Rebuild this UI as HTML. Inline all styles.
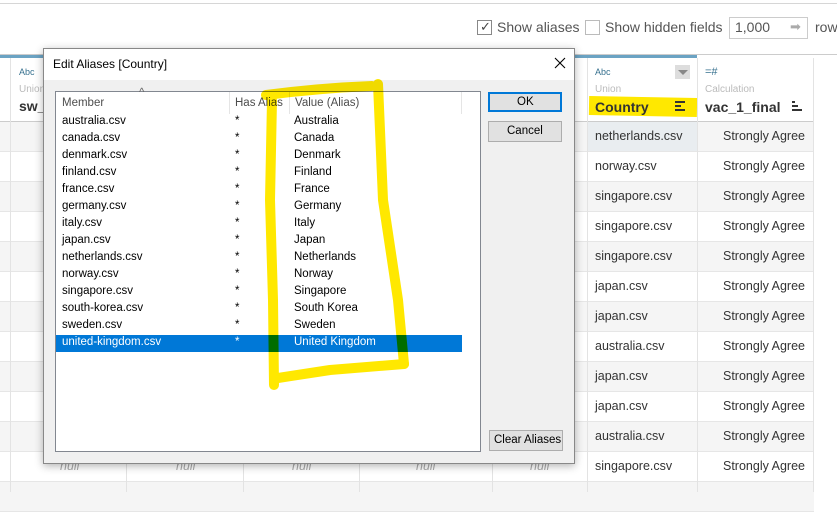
<!DOCTYPE html>
<html><head><style>
*{margin:0;padding:0;box-sizing:border-box}
body{width:837px;height:492px;overflow:hidden;background:#fff;font-family:"Liberation Sans",sans-serif;position:relative;color:#333}
.a{position:absolute}
.row{position:absolute;left:0;width:814px;height:30px;border-bottom:1px solid #e6e6e6}
.t{position:absolute;font-size:12.5px;color:#333;white-space:nowrap}
.vl{position:absolute;width:1px;background:#e3e3e3}
.dl{font-size:11.5px;position:absolute;white-space:nowrap;color:#000}
</style></head><body>
<div class="a" style="left:0;top:3px;width:837px;height:1px;background:#d6d6d6"></div>
<div class="a" style="left:477px;top:20px;width:15px;height:15px;border:1px solid #888;background:#fff"></div>
<div class="a" style="left:480px;top:19px;font-size:13px;color:#444">✓</div>
<div class="t" style="left:497px;top:19px;font-size:14px;color:#555">Show aliases</div>
<div class="a" style="left:585px;top:20px;width:15px;height:15px;border:1px solid #bbb"></div>
<div class="t" style="left:605px;top:19px;font-size:14px;color:#555">Show hidden fields</div>
<div class="a" style="left:729px;top:17px;width:79px;height:22px;border:1px solid #ccc"></div>
<div class="t" style="left:735px;top:19px;font-size:14px;color:#555">1,000</div>
<div class="t" style="left:790px;top:19px;font-size:13px;color:#aaa">➡</div>
<div class="t" style="left:815px;top:19px;font-size:14px;color:#555">row</div>
<div class="a" style="left:0;top:54px;width:837px;height:1px;background:#ccc"></div>
<div class="a" style="left:0;top:55px;width:588px;height:3px;background:#6ba3c3"></div>
<div class="a" style="left:588px;top:55px;width:109px;height:3px;background:#6ba3c3"></div>
<div class="a" style="left:0;top:121px;width:814px;height:1px;background:#ccc"></div>
<div class="t" style="left:19px;top:67px;font-size:9px;color:#37718f">Abc</div>
<div class="t" style="left:19px;top:84px;font-size:10px;color:#bbb">Union</div>
<div class="t" style="left:19px;top:98px;font-size:14px;font-weight:bold;color:#333">sw_1</div>
<div class="t" style="left:595px;top:67px;font-size:9px;color:#37718f">Abc</div>
<div class="a" style="left:675px;top:65px;width:15px;height:14px;background:#ddd"></div>
<div class="a" style="left:678px;top:70px;border-left:5px solid transparent;border-right:5px solid transparent;border-top:5px solid #888"></div>
<div class="t" style="left:595px;top:84px;font-size:10px;color:#bbb">Union</div>
<div class="a" style="left:589px;top:97px;width:108px;height:19px;background:#ffe800;transform:rotate(1deg)"></div>
<div class="t" style="left:595px;top:99px;font-size:14px;font-weight:bold;color:#333">Country</div>
<div class="a" style="left:675px;top:101px;width:10px;height:2px;background:#333"></div>
<div class="a" style="left:675px;top:105px;width:6px;height:2px;background:#333"></div>
<div class="a" style="left:675px;top:109px;width:10px;height:2px;background:#333"></div>
<div class="t" style="left:705px;top:66px;font-size:11px;color:#37718f">=#</div>
<div class="t" style="left:705px;top:84px;font-size:10px;color:#bbb">Calculation</div>
<div class="t" style="left:705px;top:99px;font-size:14px;font-weight:bold;color:#333">vac_1_final</div>
<div class="a" style="left:792px;top:101px;width:3px;height:2px;background:#333"></div>
<div class="a" style="left:792px;top:105px;width:6px;height:2px;background:#333"></div>
<div class="a" style="left:792px;top:109px;width:10px;height:2px;background:#333"></div>
<div class="row" style="top:122px;background:#f5f5f5"></div>
<div class="a" style="left:588px;top:122px;width:109px;height:29px;background:#e9edf0"></div>
<div class="row" style="top:152px"></div>
<div class="row" style="top:182px;background:#f5f5f5"></div>
<div class="row" style="top:212px"></div>
<div class="row" style="top:242px;background:#f5f5f5"></div>
<div class="row" style="top:272px"></div>
<div class="row" style="top:302px;background:#f5f5f5"></div>
<div class="row" style="top:332px"></div>
<div class="row" style="top:362px;background:#f5f5f5"></div>
<div class="row" style="top:392px"></div>
<div class="row" style="top:422px;background:#f5f5f5"></div>
<div class="row" style="top:452px"></div>
<div class="row" style="top:482px;background:#f5f5f5"></div>
<div class="vl" style="left:10px;top:58px;height:434px"></div>
<div class="vl" style="left:126px;top:58px;height:434px"></div>
<div class="vl" style="left:243px;top:58px;height:434px"></div>
<div class="vl" style="left:359px;top:58px;height:434px"></div>
<div class="vl" style="left:492px;top:58px;height:434px"></div>
<div class="vl" style="left:587px;top:58px;height:434px"></div>
<div class="vl" style="left:697px;top:58px;height:434px"></div>
<div class="vl" style="left:813px;top:58px;height:434px"></div>
<div class="t" style="left:595px;top:129px">netherlands.csv</div>
<div class="t" style="left:595px;top:159px">norway.csv</div>
<div class="t" style="left:595px;top:189px">singapore.csv</div>
<div class="t" style="left:595px;top:219px">singapore.csv</div>
<div class="t" style="left:595px;top:249px">singapore.csv</div>
<div class="t" style="left:595px;top:279px">japan.csv</div>
<div class="t" style="left:595px;top:309px">japan.csv</div>
<div class="t" style="left:595px;top:339px">australia.csv</div>
<div class="t" style="left:595px;top:369px">japan.csv</div>
<div class="t" style="left:595px;top:399px">japan.csv</div>
<div class="t" style="left:595px;top:429px">australia.csv</div>
<div class="t" style="left:595px;top:459px">singapore.csv</div>
<div class="t" style="left:723px;top:129px">Strongly Agree</div>
<div class="t" style="left:723px;top:159px">Strongly Agree</div>
<div class="t" style="left:723px;top:189px">Strongly Agree</div>
<div class="t" style="left:723px;top:219px">Strongly Agree</div>
<div class="t" style="left:723px;top:249px">Strongly Agree</div>
<div class="t" style="left:723px;top:279px">Strongly Agree</div>
<div class="t" style="left:723px;top:309px">Strongly Agree</div>
<div class="t" style="left:723px;top:339px">Strongly Agree</div>
<div class="t" style="left:723px;top:369px">Strongly Agree</div>
<div class="t" style="left:723px;top:399px">Strongly Agree</div>
<div class="t" style="left:723px;top:429px">Strongly Agree</div>
<div class="t" style="left:723px;top:459px">Strongly Agree</div>
<div class="t" style="left:60px;top:459px;font-style:italic;color:#aaa">null</div>
<div class="t" style="left:176px;top:459px;font-style:italic;color:#aaa">null</div>
<div class="t" style="left:292px;top:459px;font-style:italic;color:#aaa">null</div>
<div class="t" style="left:416px;top:459px;font-style:italic;color:#aaa">null</div>
<div class="t" style="left:530px;top:459px;font-style:italic;color:#aaa">null</div>
<div class="a" style="left:43px;top:48px;width:532px;height:416px;background:#f0f0f0;border:1px solid #888;box-shadow:0 2px 8px rgba(0,0,0,.3)">
  <div class="a" style="left:0;top:0;width:530px;height:31px;background:#fff"></div>
  <div class="dl" style="left:9px;top:8px;font-size:12px">Edit Aliases [Country]</div>
  <svg class="a" style="left:510px;top:8px" width="12" height="12"><path d="M1 1L11 11M11 1L1 11" stroke="#000" stroke-width="1.1"/></svg>
  <div class="a" style="left:11px;top:42px;width:426px;height:361px;background:#fff;border:1px solid #828790">
    <div class="dl" style="left:83px;top:-5px;color:#666">^</div>
    <div class="a" style="left:173px;top:0;width:1px;height:22px;background:#e5e5e5"></div>
    <div class="a" style="left:233px;top:0;width:1px;height:22px;background:#e5e5e5"></div>
    <div class="a" style="left:405px;top:0;width:1px;height:22px;background:#e5e5e5"></div>
    <div class="dl" style="left:6px;top:5px;color:#4d4d4d">Member</div>
    <div class="dl" style="left:179px;top:5px;color:#4d4d4d">Has Alias</div>
    <div class="dl" style="left:239px;top:5px;color:#4d4d4d">Value (Alias)</div>
    <div class="a" style="left:0;top:243px;width:406px;height:17px;background:#0078d7"></div>
  </div>
  <div class="a" style="left:444px;top:43px;width:74px;height:20px;background:#e1e1e1;border:2px solid #0078d7"></div>
  <div class="dl" style="left:473px;top:47px">OK</div>
  <div class="a" style="left:444px;top:72px;width:74px;height:21px;background:#e1e1e1;border:1px solid #adadad"></div>
  <div class="dl" style="left:463px;top:76px">Cancel</div>
  <div class="a" style="left:445px;top:381px;width:74px;height:21px;background:#e1e1e1;border:1px solid #adadad"></div>
  <div class="dl" style="left:450px;top:385px">Clear Aliases</div>
</div>
<div class="a" style="left:0;top:0">
<div class="dl" style="left:62px;top:115px">australia.csv</div><div class="dl" style="left:235px;top:115px">*</div><div class="dl" style="left:294px;top:115px">Australia</div>
<div class="dl" style="left:62px;top:132px">canada.csv</div><div class="dl" style="left:235px;top:132px">*</div><div class="dl" style="left:294px;top:132px">Canada</div>
<div class="dl" style="left:62px;top:149px">denmark.csv</div><div class="dl" style="left:235px;top:149px">*</div><div class="dl" style="left:294px;top:149px">Denmark</div>
<div class="dl" style="left:62px;top:166px">finland.csv</div><div class="dl" style="left:235px;top:166px">*</div><div class="dl" style="left:294px;top:166px">Finland</div>
<div class="dl" style="left:62px;top:183px">france.csv</div><div class="dl" style="left:235px;top:183px">*</div><div class="dl" style="left:294px;top:183px">France</div>
<div class="dl" style="left:62px;top:200px">germany.csv</div><div class="dl" style="left:235px;top:200px">*</div><div class="dl" style="left:294px;top:200px">Germany</div>
<div class="dl" style="left:62px;top:217px">italy.csv</div><div class="dl" style="left:235px;top:217px">*</div><div class="dl" style="left:294px;top:217px">Italy</div>
<div class="dl" style="left:62px;top:234px">japan.csv</div><div class="dl" style="left:235px;top:234px">*</div><div class="dl" style="left:294px;top:234px">Japan</div>
<div class="dl" style="left:62px;top:251px">netherlands.csv</div><div class="dl" style="left:235px;top:251px">*</div><div class="dl" style="left:294px;top:251px">Netherlands</div>
<div class="dl" style="left:62px;top:268px">norway.csv</div><div class="dl" style="left:235px;top:268px">*</div><div class="dl" style="left:294px;top:268px">Norway</div>
<div class="dl" style="left:62px;top:285px">singapore.csv</div><div class="dl" style="left:235px;top:285px">*</div><div class="dl" style="left:294px;top:285px">Singapore</div>
<div class="dl" style="left:62px;top:302px">south-korea.csv</div><div class="dl" style="left:235px;top:302px">*</div><div class="dl" style="left:294px;top:302px">South Korea</div>
<div class="dl" style="left:62px;top:319px">sweden.csv</div><div class="dl" style="left:235px;top:319px">*</div><div class="dl" style="left:294px;top:319px">Sweden</div>
<div class="dl" style="left:62px;top:336px;color:#fff">united-kingdom.csv</div><div class="dl" style="left:235px;top:336px;color:#fff">*</div><div class="dl" style="left:294px;top:336px;color:#fff">United Kingdom</div>
</div>
<svg class="a" style="left:0;top:0;mix-blend-mode:multiply" width="837" height="492">
<g fill="none" stroke="#ffe800" stroke-width="10" stroke-linecap="round" stroke-linejoin="round">
<path d="M266 95 Q320 88 372 86"/>
<path d="M378 84 L383 200 L398 300 L404 364"/>
<path d="M404 364 L330 370 L278 378"/>
<path d="M272 100 L270 200 L273 300 L274 385"/>
</g></svg>
</body></html>
